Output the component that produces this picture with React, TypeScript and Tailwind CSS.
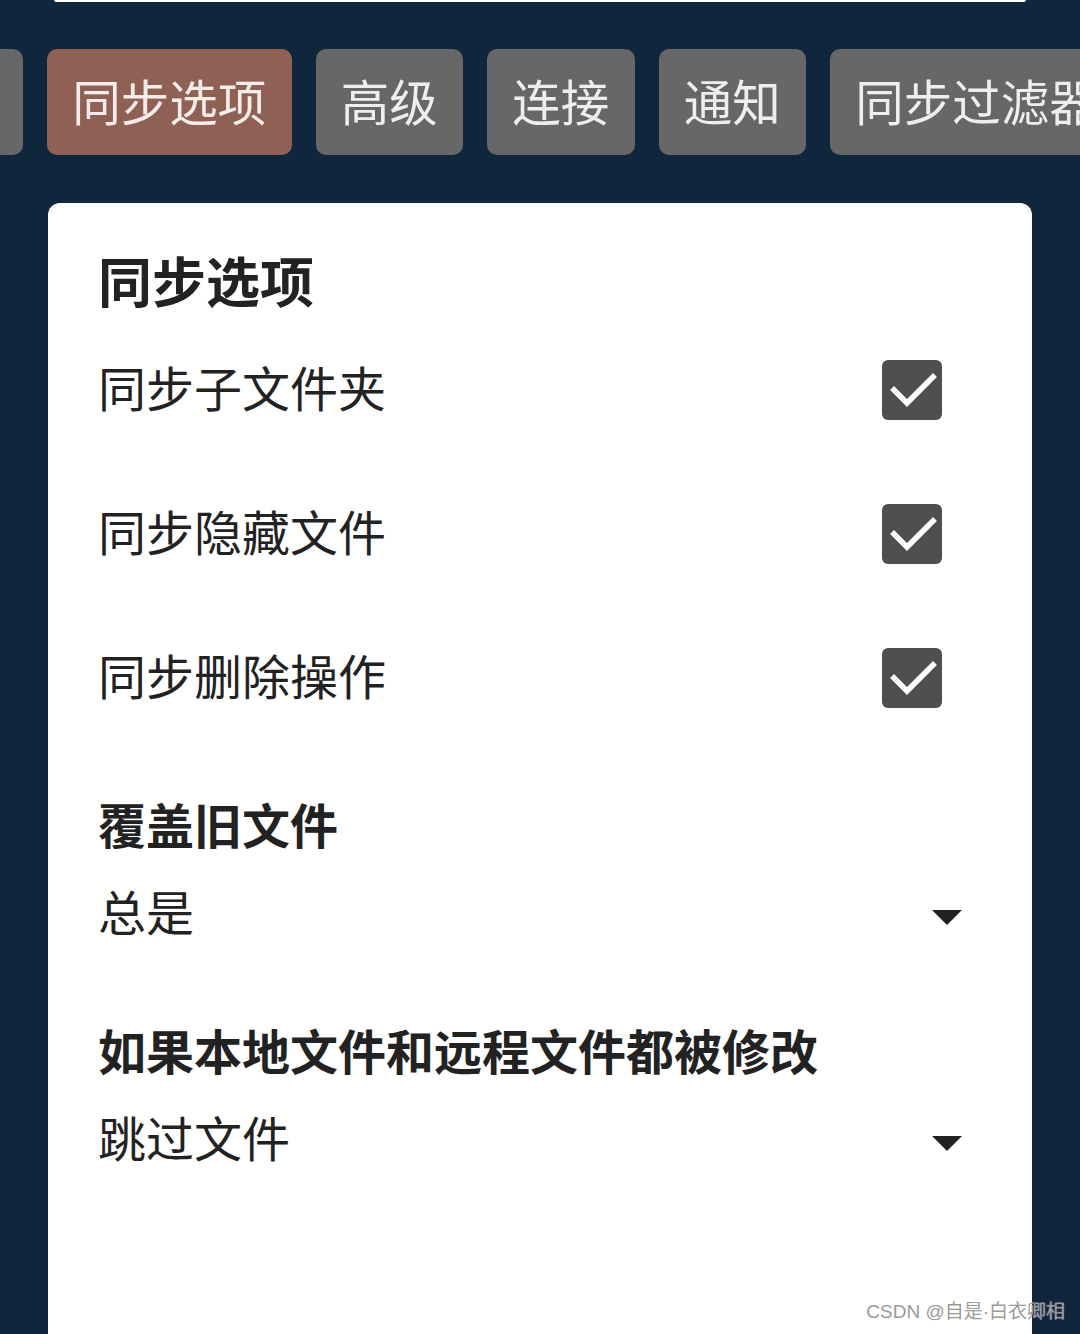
import React from 'react';

const tabs = [
  { label: '文件夹', active: false },
  { label: '同步选项', active: true },
  { label: '高级', active: false },
  { label: '连接', active: false },
  { label: '通知', active: false },
  { label: '同步过滤器', active: false },
];

const toggles = ['同步子文件夹', '同步隐藏文件', '同步删除操作'];

function Checkbox() {
  return (
    <div className="w-[60px] h-[60px] rounded-[6px] bg-[#4f504e]">
      <svg width="60" height="60" viewBox="0 0 60 60" fill="none">
        <path d="M12 30l13 13L51 17" stroke="#ffffff" strokeWidth="5.5" strokeLinecap="square" />
      </svg>
    </div>
  );
}

function Caret() {
  return (
    <svg width="30" height="16" viewBox="0 0 30 16">
      <path d="M0 0h30L15 15z" fill="#222222" />
    </svg>
  );
}

function Select({ title, value }: { title: string; value: string }) {
  return (
    <div>
      <div className="h-[64px] pb-[6px] flex items-center text-[48px] font-bold text-[#222]">{title}</div>
      <div className="mt-[8px] h-[96px] flex items-center justify-between">
        <span className="text-[48px] text-[#222] pb-[8px]">{value}</span>
        <div className="mt-[8px]">
          <Caret />
        </div>
      </div>
    </div>
  );
}

export default function App() {
  return (
    <div
      className="relative w-[1080px] h-[1334px] overflow-hidden bg-[#10263d]"
      style={{ fontFamily: '"Noto Sans CJK SC", "Noto Sans", sans-serif' }}
    >
      <div className="mx-[54px] h-[2px] bg-white rounded-b-[4px]" />

      {/* tab strip, scrolled so the first tab is mostly off screen */}
      <div className="mt-[47px] flex gap-[24px] ml-[-173px] whitespace-nowrap">
        {tabs.map((t) => (
          <div
            key={t.label}
            className={`shrink-0 h-[106px] px-[25.25px] pb-[4px] rounded-[10px] flex items-center text-[48.5px] ${
              t.active ? 'bg-[#8f6155] text-[#f5ecea]' : 'bg-[#676767] text-[#eeeeee]'
            }`}
          >
            {t.label}
          </div>
        ))}
      </div>

      <div className="mt-[48px] mx-[48px] bg-white rounded-t-[12px] h-[1200px] pl-[50px] pr-[70px] pt-[45px]">
        <div className="h-[70px] pb-[8px] flex items-center text-[54px] font-bold text-[#222]">同步选项</div>
        {toggles.map((t) => (
          <div key={t} className="h-[144px] flex items-center justify-between">
            <span className="text-[48px] text-[#222] pb-[8px]">{t}</span>
            <div className="mr-[20px]">
              <Checkbox />
            </div>
          </div>
        ))}
        <div className="mt-[44px]">
          <Select title="覆盖旧文件" value="总是" />
        </div>
        <div className="mt-[58px]">
          <Select title="如果本地文件和远程文件都被修改" value="跳过文件" />
        </div>
      </div>

      <div
        className="absolute right-[15px] bottom-[8px] text-[19px] text-[#9a9a9a]"
        style={{ fontFamily: '"Liberation Sans", "Noto Sans CJK SC", sans-serif', textShadow: '0 0 1px rgba(255,255,255,0.6)' }}
      >
        CSDN @自是·白衣卿相
      </div>
    </div>
  );
}
